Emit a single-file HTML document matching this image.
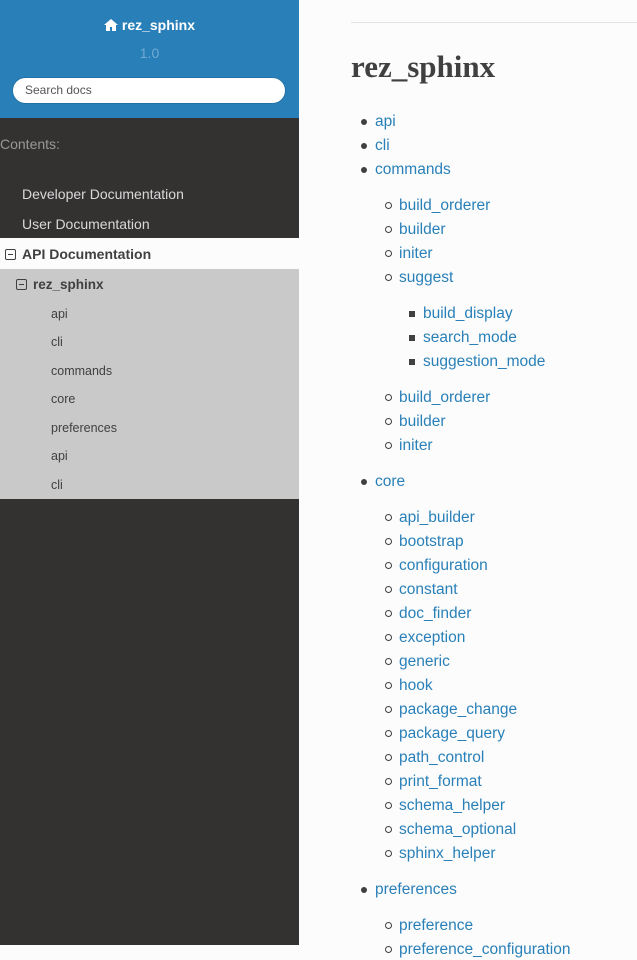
<!DOCTYPE html>
<html><head><meta charset="utf-8"><style>
*{margin:0;padding:0;box-sizing:border-box}
body{width:637px;height:945px;overflow:hidden;background:#fcfcfc;font-family:"Liberation Sans",sans-serif;position:relative}
.side{position:absolute;left:0;top:0;width:299px;height:945px;background:#343131}
.top{position:absolute;left:0;top:0;width:299px;height:118px;background:#2980b9;text-align:center}
.a{position:absolute;white-space:nowrap;line-height:20px;height:20px}
.m{font-size:15.5px;color:#2980b9}
.b1,.b2,.b3{position:absolute}
.b1{width:6px;height:6px;border-radius:50%;background:#404040}
.b2{width:7px;height:7px;border-radius:50%;border:1px solid #404040}
.b3{width:6px;height:6px;background:#404040}
.s{font-size:12.5px;color:#404040}
.box{display:inline-block;width:11px;height:11px;border:1px solid #404040;border-radius:2px;position:relative;vertical-align:-1px;margin-right:6px}
.box:after{content:"";position:absolute;left:2px;right:2px;top:4px;height:1px;background:#404040}
.w{position:absolute;left:0;top:1px;width:637px;height:945px}
</style></head><body>
<div class="side">
<div class="top">
<div class="a" style="left:0;width:299px;top:15px;color:#fff;font-weight:bold;font-size:14px;text-align:center"><svg width="14" height="12" viewBox="0 0 14 12" style="vertical-align:-1px"><path d="M7 0L0 6h2v6h4V8h2v4h4V6h2z" fill="#fff"/></svg> rez_sphinx</div>
<div class="a" style="left:0;width:299px;top:43px;color:#6fa9d2;font-size:14px;text-align:center">1.0</div>
<div style="position:absolute;left:12px;top:77px;width:274px;height:27px;background:#fff;border-radius:14px;border:1px solid #2472a4;font-size:12px;color:#555;text-align:left;padding-left:12px;line-height:25px">Search docs</div>
</div>
<div class="a" style="left:0;top:134px;font-size:14px;color:#999">Contents:</div>
<div class="a" style="left:22px;top:184px;font-size:14px;color:#d9d9d9">Developer Documentation</div>
<div class="a" style="left:22px;top:214px;font-size:14px;color:#d9d9d9">User Documentation</div>
<div style="position:absolute;left:0;top:238px;width:299px;height:31px;background:#fcfcfc"></div>
<div class="a" style="left:5px;top:244px;font-size:14px;color:#404040;font-weight:bold"><span class="box"></span>API Documentation</div>
<div style="position:absolute;left:0;top:269px;width:299px;height:230px;background:#c9c9c9"></div>
<div class="a" style="left:16px;top:275px;font-size:13.5px;color:#404040;font-weight:bold"><span class="box"></span>rez_sphinx</div>
<div class="a s" style="left:51px;top:304px">api</div>
<div class="a s" style="left:51px;top:332px">cli</div>
<div class="a s" style="left:51px;top:361px">commands</div>
<div class="a s" style="left:51px;top:389px">core</div>
<div class="a s" style="left:51px;top:418px">preferences</div>
<div class="a s" style="left:51px;top:446px">api</div>
<div class="a s" style="left:51px;top:475px">cli</div>
</div>
<div style="position:absolute;left:351px;top:22px;width:286px;height:1px;background:#e1e4e5"></div>
<div class="a" style="left:351px;top:50px;height:34px;line-height:34px;font-family:'Liberation Serif',serif;font-weight:bold;font-size:31px;color:#404040">rez_sphinx</div>
<div class="w">
<div class="b1" style="left:361px;top:118px"></div><div class="a m" style="left:375px;top:111px">api</div>
<div class="b1" style="left:361px;top:142px"></div><div class="a m" style="left:375px;top:135px">cli</div>
<div class="b1" style="left:361px;top:166px"></div><div class="a m" style="left:375px;top:159px">commands</div>
<div class="b2" style="left:385px;top:201px"></div><div class="a m" style="left:399px;top:195px">build_orderer</div>
<div class="b2" style="left:385px;top:225px"></div><div class="a m" style="left:399px;top:219px">builder</div>
<div class="b2" style="left:385px;top:249px"></div><div class="a m" style="left:399px;top:243px">initer</div>
<div class="b2" style="left:385px;top:273px"></div><div class="a m" style="left:399px;top:267px">suggest</div>
<div class="b3" style="left:409px;top:310px"></div><div class="a m" style="left:423px;top:303px">build_display</div>
<div class="b3" style="left:409px;top:334px"></div><div class="a m" style="left:423px;top:327px">search_mode</div>
<div class="b3" style="left:409px;top:358px"></div><div class="a m" style="left:423px;top:351px">suggestion_mode</div>
<div class="b2" style="left:385px;top:393px"></div><div class="a m" style="left:399px;top:387px">build_orderer</div>
<div class="b2" style="left:385px;top:417px"></div><div class="a m" style="left:399px;top:411px">builder</div>
<div class="b2" style="left:385px;top:441px"></div><div class="a m" style="left:399px;top:435px">initer</div>
<div class="b1" style="left:361px;top:478px"></div><div class="a m" style="left:375px;top:471px">core</div>
<div class="b2" style="left:385px;top:513px"></div><div class="a m" style="left:399px;top:507px">api_builder</div>
<div class="b2" style="left:385px;top:537px"></div><div class="a m" style="left:399px;top:531px">bootstrap</div>
<div class="b2" style="left:385px;top:561px"></div><div class="a m" style="left:399px;top:555px">configuration</div>
<div class="b2" style="left:385px;top:585px"></div><div class="a m" style="left:399px;top:579px">constant</div>
<div class="b2" style="left:385px;top:609px"></div><div class="a m" style="left:399px;top:603px">doc_finder</div>
<div class="b2" style="left:385px;top:633px"></div><div class="a m" style="left:399px;top:627px">exception</div>
<div class="b2" style="left:385px;top:657px"></div><div class="a m" style="left:399px;top:651px">generic</div>
<div class="b2" style="left:385px;top:681px"></div><div class="a m" style="left:399px;top:675px">hook</div>
<div class="b2" style="left:385px;top:705px"></div><div class="a m" style="left:399px;top:699px">package_change</div>
<div class="b2" style="left:385px;top:729px"></div><div class="a m" style="left:399px;top:723px">package_query</div>
<div class="b2" style="left:385px;top:753px"></div><div class="a m" style="left:399px;top:747px">path_control</div>
<div class="b2" style="left:385px;top:777px"></div><div class="a m" style="left:399px;top:771px">print_format</div>
<div class="b2" style="left:385px;top:801px"></div><div class="a m" style="left:399px;top:795px">schema_helper</div>
<div class="b2" style="left:385px;top:825px"></div><div class="a m" style="left:399px;top:819px">schema_optional</div>
<div class="b2" style="left:385px;top:849px"></div><div class="a m" style="left:399px;top:843px">sphinx_helper</div>
<div class="b1" style="left:361px;top:886px"></div><div class="a m" style="left:375px;top:879px">preferences</div>
<div class="b2" style="left:385px;top:921px"></div><div class="a m" style="left:399px;top:915px">preference</div>
<div class="b2" style="left:385px;top:945px"></div><div class="a m" style="left:399px;top:939px">preference_configuration</div>
</div>
</body></html>
